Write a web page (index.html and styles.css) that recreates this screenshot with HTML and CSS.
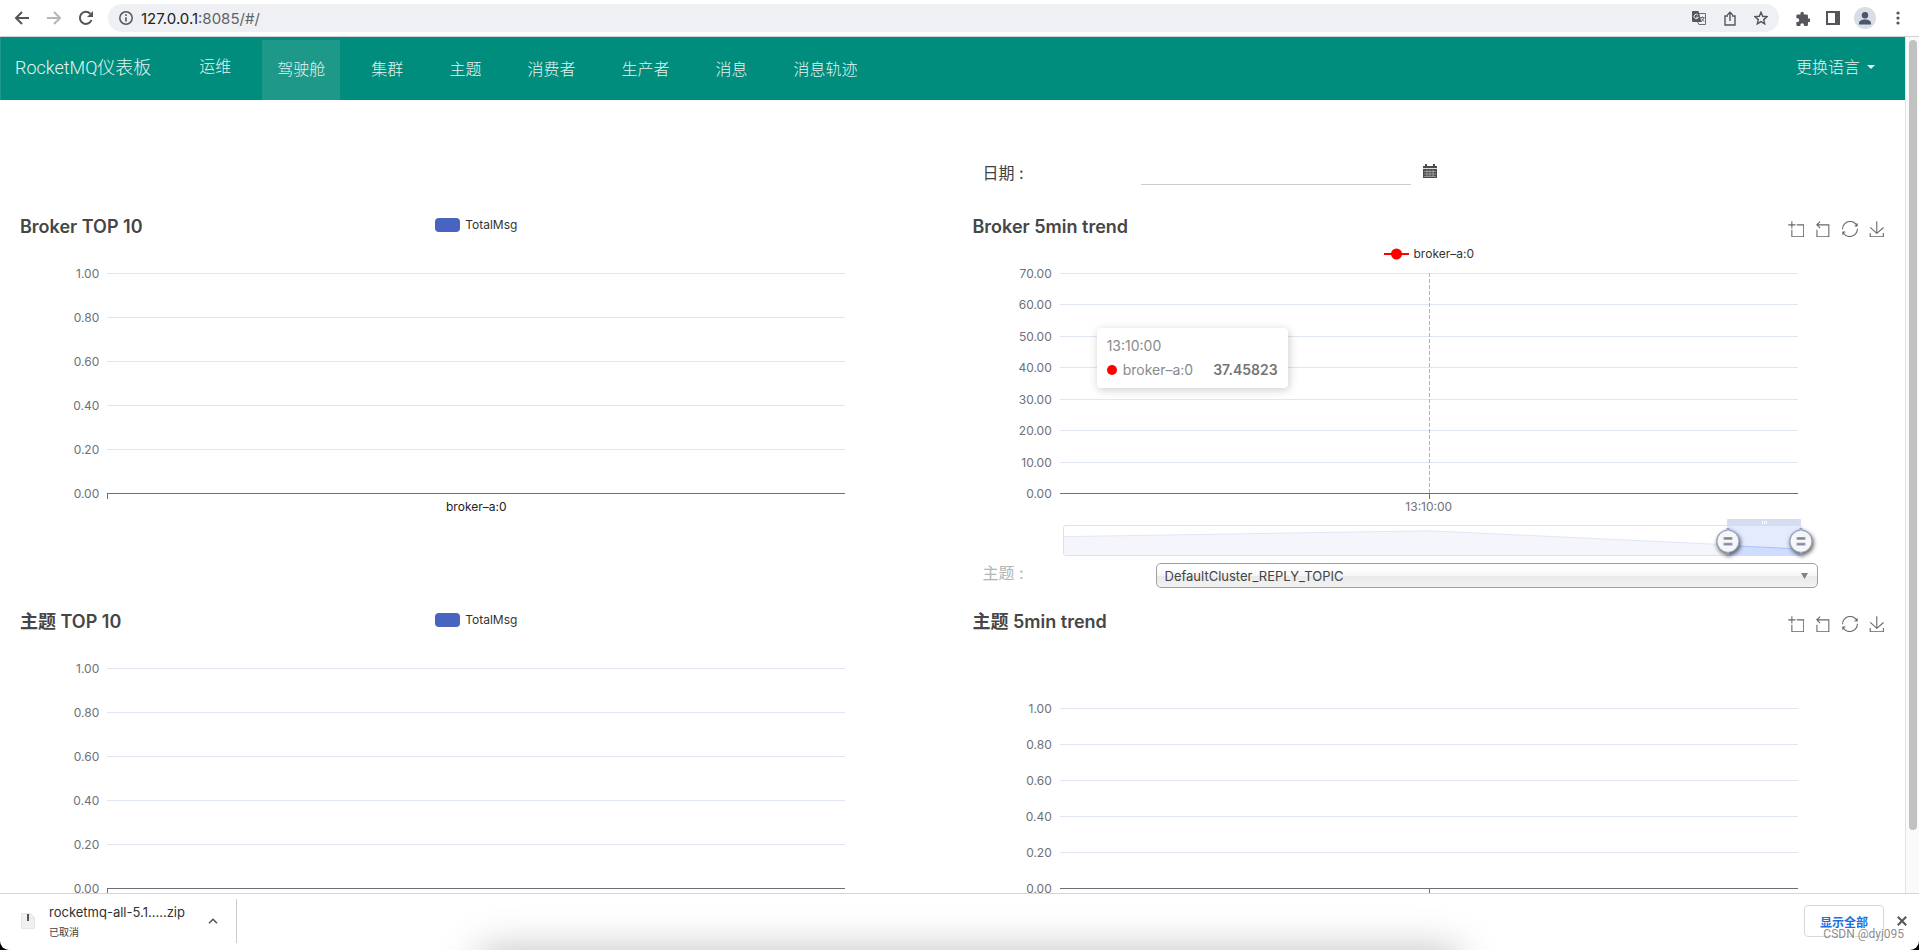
FILE: index.html
```html
<!DOCTYPE html>
<html lang="zh-CN">
<head>
<meta charset="utf-8">
<meta name="viewport" content="width=device-width, initial-scale=1">
<title>RocketMQ仪表板</title>
<link rel="stylesheet" href="styles.css">
</head>
<body>
<svg class="sprite" aria-hidden="true">
  <symbol id="tb-zoom" viewBox="-1 -1 60 60"><path d="M0,13.5h26.9 M13.5,26.9V0 M32.1,13.5H58V58H13.5 V32.1"/></symbol>
  <symbol id="tb-back" viewBox="3 -1 60 60"><path d="M22,1.4L9.9,13.5l12.3,12.3 M10.3,13.5H54.9v44.6 H10.3v-26"/></symbol>
  <symbol id="tb-restore" viewBox="0 0 60 60"><path d="M47,18.9h9.8V8.7 M56.3,20.1 C52.1,9,40.5,0.6,26.8,2.1C12.6,3.7,1.6,16.2,2.1,30.6 M13,41.1H3.1v10.2 M3.7,39.9c4.2,11.1,15.8,19.5,29.5,18 c14.2-1.6,25.2-14.1,24.7-28.5"/></symbol>
  <symbol id="tb-save" viewBox="0 -1 60 60"><path d="M4.7,22.9L29.3,45.5L54.7,23.4M4.6,43.6L4.6,58L53.8,58L53.8,43.6M29.2,45.1L29.2,0"/></symbol>
  <symbol id="grip" viewBox="0 10 20 23"><path d="M10.7,11.9v-1.3H9.3v1.3c-4.9,0.3-8.8,4.4-8.8,9.4c0,5,3.9,9.1,8.8,9.4v1.3h1.3v-1.3c4.9-0.3,8.8-4.4,8.8-9.4C19.5,16.3,15.6,12.2,10.7,11.9z M13.3,24.4H6.7V23h6.6V24.4z M13.3,19.6H6.7v-1.4h6.6V19.6z"/></symbol>
</svg>

<header class="browser-bar">
  <button class="icon-btn" aria-label="后退"><svg width="16" height="16" viewBox="0 0 16 16"><path d="M15 8H2M8 2L2 8l6 6" fill="none" stroke="#54565b" stroke-width="2"/></svg></button>
  <button class="icon-btn" aria-label="前进"><svg width="16" height="16" viewBox="0 0 16 16"><path d="M1 8h13M8 2l6 6-6 6" fill="none" stroke="#b5b6b8" stroke-width="2"/></svg></button>
  <button class="icon-btn" aria-label="重新加载"><svg width="16" height="16" viewBox="0 0 16 16"><path d="M13.5 10A6 6 0 1 1 12.300 3.800" fill="none" stroke="#54565b" stroke-width="2"/><path d="M15 1v6H9z" fill="#54565b"/></svg></button>
  <div class="omnibox">
    <svg width="14" height="14" viewBox="0 0 14 14"><circle cx="7" cy="7" r="6.200" fill="none" stroke="#54565b" stroke-width="1.500"/><path d="M7 6.200v4.300M7 3.300v1.600" stroke="#54565b" stroke-width="1.600"/></svg>
    <span class="url" role="textbox" aria-label="地址"><span class="url-host">127.0.0.1</span>:8085/#/</span>
    <button class="icon-btn" aria-label="翻译"><svg width="14" height="14" viewBox="0 0 14 14"><path d="M5 2.500h8.500v11H7L5 10" fill="none" stroke="#6b6d71"/><path d="M1 0h5.500l3 11H1a1 1 0 0 1-1-1V1a1 1 0 0 1 1-1z" fill="#54565b"/><path d="M6 4.200a2.200 2.200 0 1 0 .3 2H4.200" fill="none" stroke="#eff0f3"/><path d="M8.500 6.500h4M10.500 5.500v1M12 6.500c-.5 2-1.500 3-3 4M9.500 7.500l2.500 3" fill="none" stroke="#6b6d71"/></svg></button>
    <button class="icon-btn" aria-label="分享"><svg width="12" height="15" viewBox="0 0 12 15"><path d="M4 5H1v9h10V5H8M6 10V1.500M3.300 4L6 1.300 8.700 4" fill="none" stroke="#54565b" stroke-width="1.400"/></svg></button>
    <button class="icon-btn" aria-label="收藏"><svg width="14" height="14" viewBox="0 0 14 14"><path d="M7 1.300l1.700 4 4.300.400-3.300 2.900 1 4.300L7 10.600l-3.700 2.300 1-4.300L1 5.700l4.300-.4z" fill="none" stroke="#54565b" stroke-width="1.400"/></svg></button>
  </div>
  <div class="browser-tools">
    <button class="icon-btn" aria-label="扩展程序"><svg width="15" height="15" viewBox="0 0 22 22"><path d="M20.500 11H19V7a2 2 0 0 0-2-2h-4V3.500a2.500 2.500 0 0 0-5 0V5H4a2 2 0 0 0-2 2v3.800h1.500a2.700 2.700 0 0 1 0 5.400H2V20a2 2 0 0 0 2 2h3.800v-1.500a2.700 2.700 0 0 1 5.400 0V22H17a2 2 0 0 0 2-2v-4h1.500a2.500 2.500 0 0 0 0-5z" fill="#54565b"/></svg></button>
    <button class="icon-btn" aria-label="侧边栏"><svg width="14" height="14" viewBox="0 0 14 14"><path d="M1 1h12v12H1z" fill="none" stroke="#54565b" stroke-width="2"/><path d="M9 1h5v12H9z" fill="#54565b"/></svg></button>
    <button class="icon-btn avatar" aria-label="用户"><svg width="14" height="13" viewBox="0 0 14 13"><circle cx="7" cy="3.200" r="3.200" fill="#4b556b"/><path d="M1 12.500V11c0-2.200 3-3.500 6-3.500s6 1.300 6 3.500v1.500z" fill="#4b556b"/></svg></button>
    <button class="icon-btn" aria-label="菜单"><svg width="4" height="14" viewBox="0 0 4 14" fill="#54565b"><circle cx="2" cy="2" r="1.600"/><circle cx="2" cy="7" r="1.600"/><circle cx="2" cy="12" r="1.600"/></svg></button>
  </div>
</header>

<div class="viewport">
  <div class="page">
    <nav class="navbar">
      <a class="brand" href="#/">RocketMQ仪表板</a>
      <a class="nav-link nav-link-first" href="#/ops">运维</a>
      <ul class="nav-list">
        <li><a class="nav-link active" href="#/">驾驶舱</a></li>
        <li><a class="nav-link" href="#/cluster">集群</a></li>
        <li><a class="nav-link" href="#/topic">主题</a></li>
        <li><a class="nav-link" href="#/consumer">消费者</a></li>
        <li><a class="nav-link" href="#/producer">生产者</a></li>
        <li><a class="nav-link" href="#/message">消息</a></li>
        <li><a class="nav-link" href="#/messageTrace">消息轨迹</a></li>
      </ul>
      <button class="lang">更换语言<span class="caret"></span></button>
    </nav>

    <main class="dashboard">
      <div class="date-row">
        <label class="field-label" for="date">日期 :</label>
        <input class="date-input" id="date" type="text">
        <button class="icon-btn calendar" aria-label="选择日期"><svg width="14" height="14" viewBox="0 0 14 14"><path d="M0 2h14v12H0z" fill="#4b4b4b"/><path d="M2 0h2v3H2zM10 0h2v3h-2z" fill="#4b4b4b"/><path d="M0 4.500h14" stroke="#ddd"/><path d="M1 7.500h12M1 10h12M1 12.400h12M4 5.500V13M7 5.500V13M10 5.500V13" stroke="#c4c4c4" stroke-width=".6"/></svg></button>
      </div>

      <section class="panel">
        <header class="panel-head">
          <h2>Broker TOP 10</h2>
          <div class="legend"><i class="swatch"></i>TotalMsg</div>
        </header>
        <ol class="plot plot-bar">
          <li>1.00</li><li>0.80</li><li>0.60</li><li>0.40</li><li>0.20</li><li>0.00</li>
        </ol>
        <p class="x-label x-label-dark">broker–a:0</p>
      </section>

      <section class="panel">
        <header class="panel-head">
          <h2>Broker 5min trend</h2>
          <div class="toolbox">
            <button aria-label="区域缩放"><svg><use href="#tb-zoom"/></svg></button>
            <button aria-label="区域缩放还原"><svg><use href="#tb-back"/></svg></button>
            <button aria-label="还原"><svg><use href="#tb-restore"/></svg></button>
            <button aria-label="保存为图片"><svg><use href="#tb-save"/></svg></button>
          </div>
        </header>
        <div class="legend legend-line"><svg width="25" height="12" viewBox="0 0 25 12"><path d="M0 6h25" stroke="#f00" stroke-width="2"/><circle cx="12.500" cy="6" r="5.500" fill="#f00"/></svg>broker–a:0</div>
        <div class="plot-wrap">
          <ol class="plot plot-line">
            <li>70.00</li><li>60.00</li><li>50.00</li><li>40.00</li><li>30.00</li><li>20.00</li><li>10.00</li><li>0.00</li>
          </ol>
          <div class="pointer"></div>
          <div class="tooltip">
            <div>13:10:00</div>
            <div class="tooltip-row"><i class="dot"></i>broker–a:0<b>37.45823</b></div>
          </div>
        </div>
        <p class="x-label">13:10:00</p>
        <div class="data-zoom">
          <div class="zoom-track">
            <svg class="zoom-shape" viewBox="0 0 738 30" preserveAspectRatio="none">
              <path d="M0 11L366 5L738 23V30H0z" fill="#f5f6fc"/>
              <path d="M0 11L366 5L738 23" fill="none" stroke="#dfe6f6"/>
            </svg>
            <div class="zoom-window">
              <div class="zoom-move"></div>
              <svg class="zoom-active" viewBox="0 0 73 30" preserveAspectRatio="none">
                <path d="M0 19.500L73 23V30H0z" fill="#cedcfd"/>
                <path d="M0 19.500L73 23" fill="none" stroke="#a9c3f8"/>
              </svg>
              <svg class="grip grip-start"><use href="#grip"/></svg>
              <svg class="grip grip-end"><use href="#grip"/></svg>
            </div>
          </div>
        </div>
        <div class="topic-row">
          <label class="field-label muted" for="topic">主题 :</label>
          <div class="select-box">
            <select id="topic"><option>DefaultCluster_REPLY_TOPIC</option></select>
            <svg class="select-arrow" width="7" height="6" viewBox="0 0 7 6"><path d="M0 0h7L3.500 6z" fill="#808080"/></svg>
          </div>
        </div>
      </section>

      <section class="panel">
        <header class="panel-head">
          <h2>主题 TOP 10</h2>
          <div class="legend"><i class="swatch"></i>TotalMsg</div>
        </header>
        <ol class="plot plot-bar">
          <li>1.00</li><li>0.80</li><li>0.60</li><li>0.40</li><li>0.20</li><li>0.00</li>
        </ol>
      </section>

      <section class="panel">
        <header class="panel-head">
          <h2>主题 5min trend</h2>
          <div class="toolbox">
            <button aria-label="区域缩放"><svg><use href="#tb-zoom"/></svg></button>
            <button aria-label="区域缩放还原"><svg><use href="#tb-back"/></svg></button>
            <button aria-label="还原"><svg><use href="#tb-restore"/></svg></button>
            <button aria-label="保存为图片"><svg><use href="#tb-save"/></svg></button>
          </div>
        </header>
        <ol class="plot plot-line plot-short">
          <li>1.00</li><li>0.80</li><li>0.60</li><li>0.40</li><li>0.20</li><li>0.00</li>
        </ol>
      </section>
    </main>
  </div>
  <div class="scrollbar"><div class="thumb"></div></div>
</div>

<footer class="downloads">
  <div class="download-item">
    <svg width="14" height="16" viewBox="0 0 14 16"><path d="M1 .5h8l4.500 4.500v10.500h-13V.5z" fill="#f0f0f0" stroke="#e6e6e6"/><path d="M9 .5V5h4.500z" fill="#fff" stroke="#dedede"/><path d="M7 1v7" stroke="#555" stroke-width="2"/></svg>
    <div class="download-text">
      <div class="download-name">rocketmq-all-5.1.....zip</div>
      <div class="download-state">已取消</div>
    </div>
    <button class="icon-btn" aria-label="更多"><svg width="10" height="6" viewBox="0 0 10 6"><path d="M1 5.300l4-4 4 4" fill="none" stroke="#54565b" stroke-width="1.600"/></svg></button>
  </div>
  <button class="show-all">显示全部</button>
  <button class="icon-btn" aria-label="关闭"><svg width="10" height="10" viewBox="0 0 10 10"><path d="M.8.8l8.400 8.400M9.200.8L.8 9.200" stroke="#54565b" stroke-width="2"/></svg></button>
  <span class="watermark">CSDN @dyj095</span>
</footer>
</body>
</html>
```
FILE: styles.css
```css
* { box-sizing: border-box; }

html { background: #000; }

body {
  margin: 0;
  height: 100vh;
  display: flex;
  flex-direction: column;
  overflow: hidden;
  background: #fff;
  border-radius: 0 0 9px 9px;
  color: #404040;
  font-family: Inter, "Noto Sans CJK SC", sans-serif;
  font-size: 12px;
}

button {
  padding: 0;
  border: 0;
  background: none;
  font: inherit;
  color: inherit;
}

svg { display: block; }
.sprite { position: absolute; width: 0; height: 0; }
h2, p, ol, ul { margin: 0; padding: 0; list-style: none; }
a { text-decoration: none; }

/* Browser toolbar */
.browser-bar {
  flex: none;
  display: flex;
  align-items: center;
  gap: 16px;
  height: 37px;
  padding: 0 19px 0 14px;
  border-bottom: 1px solid #d0d2d4;
}
.icon-btn { display: flex; align-items: center; justify-content: center; }
.omnibox {
  flex: 1;
  display: flex;
  align-items: center;
  height: 28px;
  margin-left: -2px;
  padding: 0 11px;
  border-radius: 14px;
  background: #eff0f3;
  gap: 18px;
}
.url { flex: 1; margin-left: -10px; font-size: 15px; color: #5f6368; }
.url-host { color: #202124; }
.browser-tools { display: flex; align-items: center; gap: 16px; }
.avatar { width: 22px; height: 22px; margin: 0 4px 0 -2px; border-radius: 50%; background: #d9dde5; }

/* Page viewport */
.viewport { flex: 1; min-height: 0; display: flex; }
.page { flex: 1; min-width: 0; overflow: hidden; }
.scrollbar {
  width: 14px;
  padding: 3px 2px 63px 3px;
  border-left: 1px solid #e3e3e3;
  background: #fafafa;
}
.thumb { height: 100%; border-radius: 4px; background: #c1c1c1; }

/* Navbar */
.navbar {
  display: flex;
  align-items: center;
  height: 63px;
  padding: 3px 30px 0 14px;
  border-left: 1px solid #1e9888;
  background: #008d7d;
  color: #e4f4f2;
  font-family: Roboto, "Noto Sans CJK SC", sans-serif;
  font-weight: 300;
  font-size: 16px;
}
.brand { margin: 0 33px 9px 0; color: inherit; font-size: 18px; }
.nav-link { display: block; padding: 0 15px; line-height: 60px; color: inherit; }
.nav-link-first { margin: 0 16px 6px 0; }
.nav-list { display: flex; gap: 16px; }
.active { background: #1e9888; }
.lang { display: flex; align-items: center; gap: 7px; margin: 0 0 9px auto; }
.caret { border: 4px solid transparent; border-top-color: #e4f4f2; border-bottom: 0; margin-top: 3px; }

/* Dashboard */
.dashboard { display: grid; grid-template-columns: 1fr 1fr; }
.date-row {
  grid-column: 2;
  display: flex;
  align-items: flex-end;
  height: 85px;
  padding-left: 30px;
  margin-bottom: 28px;
}
.field-label { width: 158px; font-size: 16px; line-height: 24px; color: #404040; }
.muted { color: #b4b4b4; }
.date-input {
  width: 270px;
  height: 28px;
  border: 0;
  border-bottom: 1px solid #ccc;
  background: transparent;
  font: inherit;
}
.calendar { margin: 0 0 7px 12px; }

.panel { padding: 0 15px; min-width: 0; }
.panel-head { position: relative; display: flex; justify-content: space-between; padding: 3px 5px 0; }
.panel-head h2 { font-size: 18px; line-height: 22px; font-weight: 600; color: #464646; }
.legend {
  position: absolute;
  inset: 4px 0 auto 0;
  display: flex;
  align-items: center;
  justify-content: center;
  gap: 5px;
  line-height: 16px;
  color: #333;
}
.swatch { width: 25px; height: 14px; border-radius: 4px; background: #4864c0; }
.legend-line { position: static; margin-top: 8px; }
.toolbox { display: flex; gap: 11px; padding-top: 4px; }
.toolbox svg { width: 16px; height: 16px; fill: none; stroke: #666; stroke-width: 4; }

.plot {
  position: relative;
  display: flex;
  flex-direction: column;
  justify-content: space-between;
  height: 235px;
  margin-top: 28px;
}
.plot li {
  display: grid;
  grid-template-columns: calc(10% - 8px) 1fr calc(10% - 8px);
  column-gap: 8px;
  align-items: center;
  line-height: 15px;
  color: #6e7079;
  text-align: right;
}
.plot li::before { content: ""; order: 2; height: 1px; background: #e0e6f1; }
.plot li:last-child::before { background: #6e7079; }
.plot li::after { content: ""; order: 3; }
.plot::after {
  content: "";
  position: absolute;
  left: 10%;
  bottom: 2px;
  width: 1px;
  height: 5px;
  background: #6e7079;
}
.plot-line::after { left: 50%; }
.plot-wrap { position: relative; }
.plot-wrap .plot { margin-top: 4px; }
.plot-short { height: 195px; margin-top: 68px; }
.pointer {
  position: absolute;
  left: 50%;
  top: 7px;
  bottom: 7px;
  width: 1px;
  background: repeating-linear-gradient(#b0b3bb 0 4px, transparent 4px 6px);
}
.tooltip {
  position: absolute;
  left: 14%;
  top: 62px;
  padding: 10px;
  border-radius: 4px;
  background: #fff;
  box-shadow: 1px 2px 10px rgba(0, 0, 0, 0.2);
  font-size: 14px;
  line-height: 16px;
  color: #8a8a8a;
}
.tooltip-row { display: flex; align-items: center; margin-top: 8px; }
.tooltip-row b { margin-left: 20px; font-weight: 600; color: #757575; }
.dot { width: 10px; height: 10px; margin-right: 6px; border-radius: 50%; background: #f00; }
.x-label { line-height: 12px; padding-bottom: 2px; text-align: center; color: #6e7079; }
.x-label-dark { color: #222; }

/* Range slider below the trend chart */
.data-zoom { padding: 10px 88px 0 95px; }
.zoom-track { position: relative; height: 31px; border: 1px solid #d9e1f4; border-radius: 3px; }
.zoom-shape { width: 100%; height: 29px; }
.zoom-window { position: absolute; top: -7px; right: 0; bottom: -1px; width: 10%; background: rgba(225, 233, 253, 0.9); }
.zoom-move {
  height: 7px;
  border-radius: 2px 2px 0 0;
  background: linear-gradient(90deg, #fff 1px, transparent 1px 2px, #fff 2px 3px, transparent 3px 4px, #fff 4px 5px) center / 5px 3px no-repeat #d5def0;
}
.zoom-active { width: 100%; height: 30px; }
.grip {
  position: absolute;
  top: 9px;
  width: 24px;
  height: 27px;
  overflow: visible;
  fill: #f6f6f6;
  stroke: #8f9fbd;
  stroke-width: 1;
  filter: drop-shadow(1px 2px 2px rgba(0, 0, 0, 0.65));
}
.grip-start { left: -11px; }
.grip-end { right: -12px; }

.topic-row { display: flex; padding: 7px 72px 20px 15px; }
.topic-row .field-label { width: 173px; line-height: 20px; }
.select-box { position: relative; flex: 1; }
.select-box select {
  appearance: none;
  display: block;
  width: 100%;
  height: 25px;
  padding: 0 8px;
  border: 1px solid #a0a0a0;
  border-radius: 5px;
  background: linear-gradient(#fff 20%, #f6f6f6 50%, #eaeaea 52%, #f2f2f2 100%);
  font: inherit;
  font-size: 13px;
  color: #444;
}
.select-arrow { position: absolute; right: 10px; top: 10px; }

/* Download shelf */
.downloads {
  position: relative;
  flex: none;
  display: flex;
  align-items: center;
  height: 57px;
  padding: 0 12px 2px 21px;
  border-top: 1px solid #d4d6d8;
  overflow: hidden;
}
.downloads::after {
  content: "";
  position: absolute;
  inset: 100% 24% auto 25%;
  height: 40px;
  box-shadow: 0 0 40px rgba(0, 0, 0, 0.26);
}
.download-item {
  display: flex;
  align-items: center;
  height: 44px;
  padding-right: 18px;
  border-right: 1px solid #ccc;
}
.download-text { width: 159px; margin-left: 14px; }
.download-name { font-size: 13px; line-height: 18px; color: #303134; }
.download-state { margin-top: 4px; font-size: 10px; line-height: 14px; color: #404040; }
.show-all {
  width: 80px;
  height: 32px;
  margin: 0 13px 0 auto;
  border: 1px solid #d5d8dd;
  border-radius: 4px;
  color: #1a6fe0;
  font-weight: 700;
}
.watermark {
  position: absolute;
  right: 15px;
  bottom: 9px;
  font-family: Roboto, sans-serif;
  color: rgba(110, 110, 110, 0.8);
  text-shadow: 1px 1px 0 #fff;
}
```
